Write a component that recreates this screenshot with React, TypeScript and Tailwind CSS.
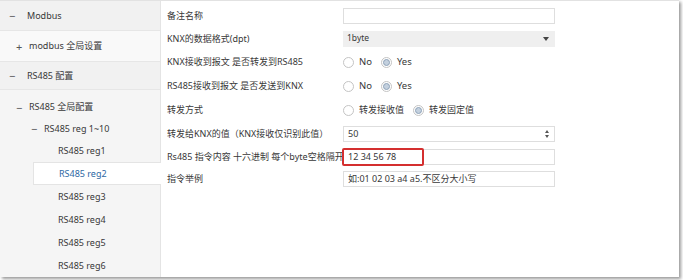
import React from "react";

const font = { fontFamily: '"Noto Sans", "Noto Sans CJK SC", sans-serif' };

function Radio({ checked, label }: { checked?: boolean; label: string }) {
  return (
    <div className="flex items-center gap-[5px]">
      <span className="flex h-[11px] w-[11px] items-center justify-center rounded-full border border-[#c4c4c4] bg-white">
        {checked && <span className="h-[7px] w-[7px] rounded-full border border-[#8ea2b8] bg-[#c3d0de]" />}
      </span>
      <span>{label}</span>
    </div>
  );
}

function NavRow({ h, indent, sign, label, signW = "w-[13px]", className = "" }: { h: string; indent: string; sign?: string; label: string; signW?: string; className?: string }) {
  return (
    <div className={`flex items-center ${h} ${indent} ${className}`}>
      {sign && <span className={`${signW} text-[11px] leading-none text-[#555]`}>{sign}</span>}
      <span>{label}</span>
    </div>
  );
}

export default function App() {
  const regs = ["RS485 reg1", "RS485 reg2", "RS485 reg3", "RS485 reg4", "RS485 reg5", "RS485 reg6"];
  return (
    <div className="h-[280px] w-[683px] overflow-hidden bg-white text-[9px] text-[#383838]" style={font}>
      <div className="flex h-[277px] w-[679px] border-t border-[#e2e2e2] shadow-[2px_2px_3px_rgba(0,0,0,0.4)]">
        <aside className="w-[161px] shrink-0 border-r border-[#e4e4e4] bg-[#f5f5f5]">
          <NavRow h="h-[30px]" indent="pl-[9px]" signW="w-[18px]" sign="−" label="Modbus" className="border-b border-[#e6e6e6] bg-[#f1f1f1]" />
          <NavRow h="h-[31px]" indent="pl-[16px]" sign="+" label="modbus 全局设置" className="border-b border-[#e6e6e6] bg-[#f9f9f9]" />
          <NavRow h="h-[28px]" indent="pl-[9px]" signW="w-[18px]" sign="−" label="RS485 配置" className="border-b border-[#e6e6e6] bg-[#f1f1f1]" />
          <div className="pt-[6px]">
            <NavRow h="h-[22px]" indent="pl-[16px]" sign="−" label="RS485 全局配置" />
            <NavRow h="h-[21px]" indent="pl-[31px]" sign="−" label="RS485 reg 1~10" />
            {regs.map((r) =>
              r === "RS485 reg2" ? (
                <div key={r} className="relative -mr-px ml-[33px] flex h-[23px] items-center border-y border-l border-[#e4e4e4] bg-white pl-[25px] text-[#2d68a3]">
                  {r}
                </div>
              ) : (
                <div key={r} className="flex h-[23px] items-center pl-[58px]">
                  {r}
                </div>
              )
            )}
          </div>
        </aside>
        <main className="flex-1 bg-white pt-[3px]">
          <div className="flex h-[23px] items-center pl-[6px]">
            <span className="w-[176px]">备注名称</span>
            <div className="h-[16px] w-[212px] border border-[#dedede] bg-white" />
          </div>
          <div className="flex h-[23px] items-center pl-[6px]">
            <span className="w-[176px]">KNX的数据格式(dpt)</span>
            <div className="flex h-[16px] w-[212px] items-center justify-between bg-[#efefef] pl-[4px] pr-[6px] text-[8.5px]">
              <span>1byte</span>
              <span className="h-0 w-0 border-x-[3px] border-t-[4px] border-x-transparent border-t-[#444]" />
            </div>
          </div>
          <div className="flex h-[24px] items-center pl-[6px]">
            <span className="w-[176px]">KNX接收到报文 是否转发到RS485</span>
            <div className="flex items-center gap-[9px] text-[9.5px]">
              <Radio label="No" />
              <Radio checked label="Yes" />
            </div>
          </div>
          <div className="flex h-[24px] items-center pl-[6px]">
            <span className="w-[176px]">RS485接收到报文 是否发送到KNX</span>
            <div className="flex items-center gap-[9px] text-[9.5px]">
              <Radio label="No" />
              <Radio checked label="Yes" />
            </div>
          </div>
          <div className="flex h-[24px] items-center pl-[6px]">
            <span className="w-[176px]">转发方式</span>
            <div className="flex items-center gap-[9px]">
              <Radio label="转发接收值" />
              <Radio checked label="转发固定值" />
            </div>
          </div>
          <div className="flex h-[24px] items-center pl-[6px]">
            <span className="w-[176px]">转发给KNX的值（KNX接收仅识别此值）</span>
            <div className="flex h-[16px] w-[212px] items-center justify-between border border-[#dedede] pl-[4px] pr-[5px]">
              <span>50</span>
              <span className="flex flex-col gap-[2px]">
                <span className="h-0 w-0 border-x-[2.5px] border-b-[3px] border-x-transparent border-b-[#555]" />
                <span className="h-0 w-0 border-x-[2.5px] border-t-[3px] border-x-transparent border-t-[#555]" />
              </span>
            </div>
          </div>
          <div className="flex h-[22px] items-center pl-[6px]">
            <span className="w-[176px] whitespace-nowrap">Rs485 指令内容 十六进制 每个byte空格隔开</span>
            <div className="relative flex h-[16px] w-[212px] items-center border border-[#dedede] pl-[4px]">
              <span>12 34 56 78</span>
              <span className="absolute -left-[2px] -top-[2px] h-[18px] w-[82px] rounded-[2px] border-2 border-[#d42f2f]" />
            </div>
          </div>
          <div className="flex h-[22px] items-center pl-[6px]">
            <span className="w-[176px]">指令举例</span>
            <div className="flex h-[16px] w-[212px] items-center border border-[#dedede] pl-[4px]">
              <span>如:01 02 03 a4 a5.不区分大小写</span>
            </div>
          </div>
        </main>
      </div>
    </div>
  );
}
